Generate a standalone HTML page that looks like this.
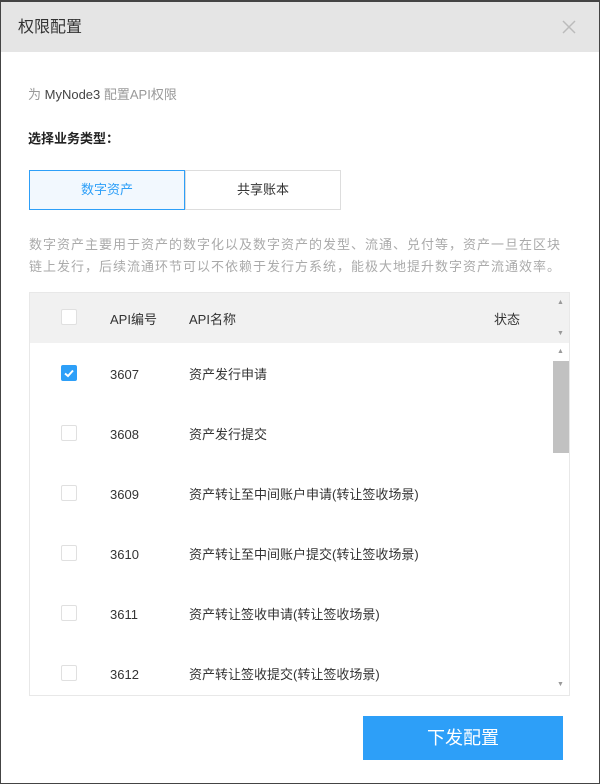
<!DOCTYPE html>
<html><head><meta charset="utf-8"><style>
*{margin:0;padding:0;box-sizing:border-box}
body{width:600px;height:784px;background:#fff;font-family:"Liberation Sans","Noto Sans CJK SC",sans-serif;position:relative;overflow:hidden;border:1px solid #444;border-top:2px solid #444}
.hd{position:absolute;left:0;top:0;width:598px;height:50px;background:#e5e5e5}
.hd .t{position:absolute;left:17px;top:16px;font-size:16px;line-height:20px;color:#333}
.hd svg{position:absolute;left:561px;top:18px}
.a{position:absolute;font-size:13px;line-height:16px}
.tab{position:absolute;top:168px;height:40px;width:156px;text-align:center;line-height:38px;font-size:13px;border:1px solid #ddd}
.tbl{position:absolute;left:28px;top:290px;width:541px;height:404px;border:1px solid #e8e8e8;overflow:hidden}
.th{position:absolute;left:0;top:0;width:539px;height:50px;background:#f1f1f1}
.cb{position:absolute;left:31px;width:16px;height:16px;border:1px solid #e0e0e0;background:#fff;border-radius:2px}
.c{position:absolute;font-size:13px;line-height:16px;color:#333}
.sb{position:absolute;left:523px;top:68px;width:16px;height:92px;background:#c1c1c1}
.ar{position:absolute;left:527px;font-size:7px;color:#999}
.btn{position:absolute;left:362px;top:714px;width:200px;height:44px;background:#2d9ff8;color:#fff;font-size:18px;text-align:center;line-height:44px}
</style></head><body>
<div class="hd"><div class="t">权限配置</div><svg width="14" height="14" viewBox="0 0 14 14"><path d="M1 1L13 13M13 1L1 13" stroke="#bbb" stroke-width="1.5"/></svg></div>
<div class="a" style="left:27px;top:85px;color:#999">为 <span style="color:#444">MyNode3</span> 配置API权限</div>
<div class="a" style="left:27px;top:129px;color:#222;font-weight:bold">选择业务类型：</div>
<div class="tab" style="left:28px;border-color:#2d9ff8;background:#f2f8fe;color:#2d9ff8">数字资产</div>
<div class="tab" style="left:184px;color:#333">共享账本</div>
<div class="a" style="left:28px;top:232px;width:560px;color:#aaa;line-height:22px;font-size:13px;letter-spacing:1px">数字资产主要用于资产的数字化以及数字资产的发型、流通、兑付等，资产一旦在区块<br>链上发行，后续流通环节可以不依赖于发行方系统，能极大地提升数字资产流通效率。</div>
<div class="tbl">
<div class="th"></div>
<div class="cb" style="top:16px"></div>
<div class="c" style="left:80px;top:19px">API编号</div>
<div class="c" style="left:159px;top:19px">API名称</div>
<div class="c" style="left:464px;top:19px">状态</div>
<div class="ar" style="top:6px">▲</div><div class="ar" style="top:37px">▼</div>
<div class="ar" style="top:55px">▲</div><div class="sb"></div><div class="ar" style="top:388px">▼</div>
<div class="cb" style="top:72px;background:#2d9ff8;border-color:#2d9ff8"><svg width="14" height="14" viewBox="0 0 14 14" style="position:absolute;left:0;top:0"><path d="M3 7.5L6 10L11 4.5" stroke="#fff" stroke-width="2" fill="none"/></svg></div>
<div class="c" style="left:80px;top:74px">3607</div><div class="c" style="left:159px;top:74px">资产发行申请</div>
<div class="cb" style="top:132px"></div><div class="c" style="left:80px;top:134px">3608</div><div class="c" style="left:159px;top:134px">资产发行提交</div>
<div class="cb" style="top:192px"></div><div class="c" style="left:80px;top:194px">3609</div><div class="c" style="left:159px;top:194px">资产转让至中间账户申请(转让签收场景)</div>
<div class="cb" style="top:252px"></div><div class="c" style="left:80px;top:254px">3610</div><div class="c" style="left:159px;top:254px">资产转让至中间账户提交(转让签收场景)</div>
<div class="cb" style="top:312px"></div><div class="c" style="left:80px;top:314px">3611</div><div class="c" style="left:159px;top:314px">资产转让签收申请(转让签收场景)</div>
<div class="cb" style="top:372px"></div><div class="c" style="left:80px;top:374px">3612</div><div class="c" style="left:159px;top:374px">资产转让签收提交(转让签收场景)</div>
</div>
<div class="btn">下发配置</div>
</body></html>
